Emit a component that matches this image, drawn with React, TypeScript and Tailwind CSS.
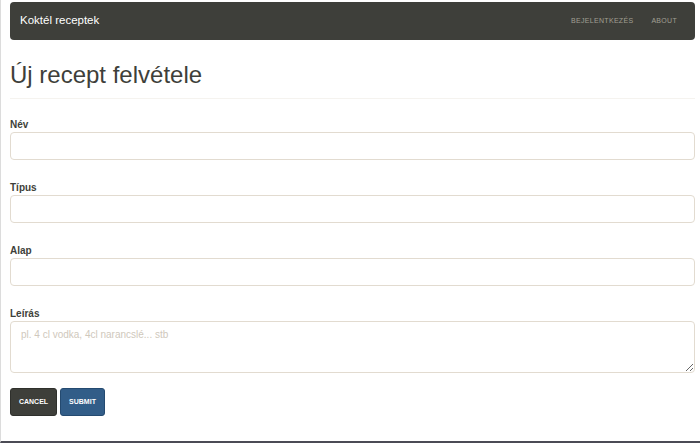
export default function App() {
  const fields = [
    { label: 'Név', id: 'nev' },
    { label: 'Típus', id: 'tipus' },
    { label: 'Alap', id: 'alap' },
  ]

  return (
    <div className="w-[700px] h-[443px] bg-white border-l border-[#dcdcdc] border-b-2 border-b-[#4b4b55] font-['Liberation_Sans',Arial,sans-serif] text-[#3e3f3a] overflow-hidden">
      {/* Navbar */}
      <nav className="ml-[9px] mr-[5px] mt-[2px] h-[38px] rounded-[4px] bg-[#3e3f3a] flex items-center justify-between pl-[10px] pr-[18px]">
        <span className="text-white text-[11.5px] leading-none">Koktél receptek</span>
        <div className="flex items-center gap-[18px] text-[7px] uppercase text-[#a09f93] tracking-[0.3px]">
          <span>Bejelentkezés</span>
          <span>About</span>
        </div>
      </nav>

      <div className="ml-[9px] mr-[5px]">
        {/* Page header */}
        <div className="mt-[22px] pb-[10px] border-b border-[#f5f3ef]">
          <h1 className="text-[24px] leading-[26px] font-normal">Új recept felvétele</h1>
        </div>

        {/* Form */}
        <form className="mt-[19px] flex flex-col">
          {fields.map((f, i) => (
            <div key={f.id} className={i > 0 ? 'mt-[21px]' : ''}>
              <label htmlFor={f.id} className="block text-[10px] leading-[14px] font-bold">
                {f.label}
              </label>
              <input
                id={f.id}
                type="text"
                className="block w-full h-[28px] rounded-[4px] border border-[#e2dbd0] bg-white px-[10px] outline-none"
              />
            </div>
          ))}
          <div className="mt-[21px]">
            <label htmlFor="leiras" className="block text-[10px] leading-[14px] font-bold">
              Leírás
            </label>
            <textarea
              id="leiras"
              placeholder="pl. 4 cl vodka, 4cl narancslé... stb"
              className="block w-full h-[52px] rounded-[4px] border border-[#e2dbd0] bg-white px-[10px] py-[6px] text-[10px] leading-[14px] outline-none placeholder:text-[#cfc8bc]"
            />
          </div>
          <div className="mt-[15px] flex gap-[3px]">
            <button
              type="button"
              className="h-[28px] w-[47px] rounded-[3px] bg-[#3e3f3a] border border-[#2f302c] text-white text-[7px] font-bold uppercase"
            >
              Cancel
            </button>
            <button
              type="submit"
              className="h-[28px] w-[45px] rounded-[3px] bg-[#325d88] border border-[#244a70] text-white text-[7px] font-bold uppercase"
            >
              Submit
            </button>
          </div>
        </form>
      </div>
    </div>
  )
}
